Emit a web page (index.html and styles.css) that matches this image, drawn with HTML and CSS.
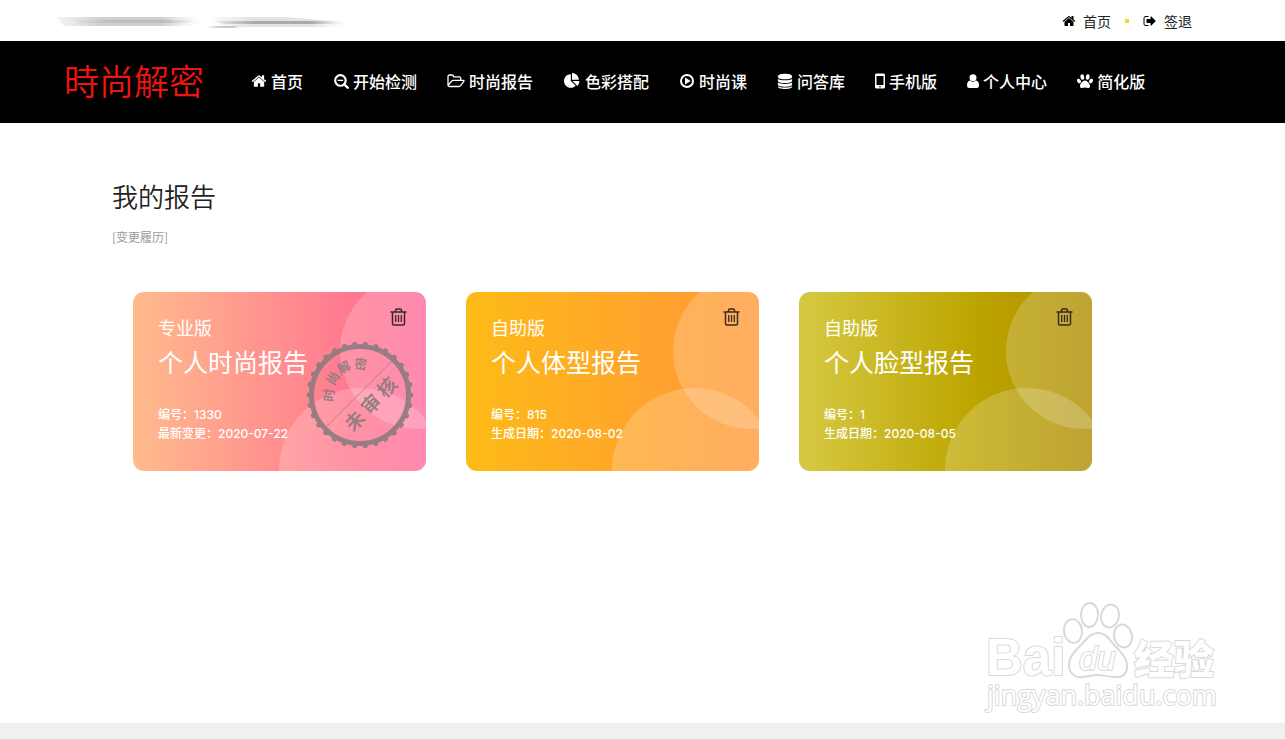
FILE: index.html
```html
<!DOCTYPE html>
<html lang="zh-CN">
<head>
<meta charset="utf-8">
<meta name="viewport" content="width=device-width, initial-scale=1">
<title>我的报告</title>
<link rel="stylesheet" href="styles.css">
</head>
<body>
<svg class="defs" aria-hidden="true">
  <symbol id="home" viewBox="0 0 1792 1792"><path d="M1472 992v480q0 26-19 45t-45 19h-384v-384h-256v384h-384q-26 0-45-19t-19-45v-480q0-1 .5-3t.5-3l575-474 575 474q1 2 1 6zm223-69l-62 74q-8 9-21 11h-3q-13 0-21-7l-692-577-692 577q-12 8-24 7-13-2-21-11l-62-74q-8-10-7-23.5t11-21.5l719-599q32-26 76-26t76 26l244 204v-195q0-14 9-23t23-9h192q14 0 23 9t9 23v408l219 182q10 8 11 21.5t-7 23.5z"/></symbol>
  <symbol id="exit" viewBox="0 0 1792 1792"><path d="M704 1440q0 4 1 20t.5 26.5-3 23.5-10 19.5-20.5 6.5h-320q-119 0-203.5-84.5t-84.5-203.5v-704q0-119 84.5-203.5t203.5-84.5h320q13 0 22.5 9.5t9.5 22.5q0 4 1 20t.5 26.5-3 23.5-10 19.5-20.5 6.5h-320q-66 0-113 47t-47 113v704q0 66 47 113t113 47h312l11.5 1 11.5 3 8 5.5 7 9 2 13.5zm928-544q0 26-19 45l-544 544q-19 19-45 19t-45-19-19-45v-288h-448q-26 0-45-19t-19-45v-384q0-26 19-45t45-19h448v-288q0-26 19-45t45-19 45 19l544 544q19 19 19 45z"/></symbol>
  <symbol id="trash" viewBox="0 0 17 18"><g fill="none" stroke="currentColor" stroke-width="1.5"><path d="M.5 3.9h16M5.5 3.6V2.4q0-1.5 1.5-1.5h3q1.500 0 1.500 1.500v1.200M2.500 4v11.700q0 1.300 1.300 1.300h9.400q1.300 0 1.300-1.300V4"/><path stroke-width="1.300" d="M5.700 7v7M8.500 7v7M11.300 7v7"/></g></symbol>
</svg>

<div class="topbar">
  <svg class="smudge" viewBox="0 0 300 20" aria-hidden="true">
    <defs>
      <linearGradient id="fadeA"><stop offset="0" stop-color="#ccc" stop-opacity=".4"/><stop offset=".3" stop-color="#aaa"/><stop offset=".75" stop-color="#aaa"/><stop offset="1" stop-color="#ccc" stop-opacity="0"/></linearGradient>
      <filter id="soft" x="-10%" y="-50%" width="120%" height="200%"><feGaussianBlur stdDeviation="1 .6"/></filter>
    </defs>
    <g fill="url(#fadeA)" filter="url(#soft)">
      <path opacity=".55" d="M2 6h142v9H10z"/>
      <path opacity=".5" d="M20 9h124v3H26z"/>
      <path opacity=".35" d="M158 6h74l58 5-4 5H170z"/>
      <path d="M160 10h130v3H172z"/>
      <path opacity=".6" d="M155 15h32v2h-32z"/>
    </g>
  </svg>
  <nav class="account">
    <a href="#"><svg class="icon-sm"><use href="#home"/></svg>首页</a>
    <span class="dot"></span>
    <a href="#"><svg class="icon-sm"><use href="#exit"/></svg>签退</a>
  </nav>
</div>

<header class="header">
  <a class="logo" href="#" aria-label="時尚解密"><svg viewBox="0 0 144 56"><text x="0" y="41">時尚解密</text></svg></a>
  <nav class="menu">
    <a href="#"><svg viewBox="0 0 1792 1792"><use href="#home"/></svg>首页</a>
    <a href="#"><svg viewBox="0 0 1792 1792"><circle cx="832" cy="832" r="590" fill="none" stroke="currentColor" stroke-width="240"/><path d="M1270 1270l380 380" stroke="currentColor" stroke-width="270" stroke-linecap="round"/><path d="M520 750h620v150H520z"/></svg>开始检测</a>
    <a href="#"><svg class="wide" viewBox="0 0 18 16"><path fill="none" stroke="currentColor" stroke-width="1.300" stroke-linejoin="round" d="M1 12V3.500Q1 2 2.500 2H5q1.500 0 1.500 1.500v.3h5.700q1.500 0 1.500 1.500v2M1 12.500l3.600-4.400q.7-.8 1.600-.8h10q1.300 0 .6 1.100l-3 4q-.8 1.100-2 1.100H2.500Q1 13.500 1 12z"/></svg>时尚报告</a>
    <a href="#"><svg class="wide" viewBox="0 0 1792 1792"><path d="M768 890l546 546q-106 108-247.500 168t-298.500 60q-209 0-385.500-103t-279.500-279.500-103-385.500 103-385.500 279.500-279.500 385.500-103v762zm187 6h773q0 157-60 298.500t-168 247.500zm709-128h-768v-768q209 0 385.500 103t279.500 279.500 103 385.500z"/></svg>色彩搭配</a>
    <a href="#"><svg viewBox="0 0 16 16"><circle cx="8" cy="8" r="6" fill="none" stroke="currentColor" stroke-width="2"/><path d="M6 4.600L11.700 8 6 11.400z"/></svg>时尚课</a>
    <a href="#"><svg viewBox="0 0 16 18"><path d="M0 3.500C0-.2 16-.2 16 3.500v1c0 3.500-16 3.500-16 0zM0 6.700c2 2 14 2 16 0v2c0 3.400-16 3.400-16 0zM0 10.800c2 2 14 2 16 0v2c0 3.400-16 3.400-16 0zM0 14.900c2 2 14 2 16 0v.6c0 3.300-16 3.300-16 0z"/></svg>问答库</a>
    <a href="#"><svg class="narrow" viewBox="0 0 10 16"><path fill-rule="evenodd" d="M1.500.5h7q1.500 0 1.500 1.500v12q0 1.500-1.500 1.500h-7Q0 15.500 0 14V2Q0 .5 1.500.5zM1.500 3v9h7V3zM5 13a.8.8 0 100 1.600.8.8 0 000-1.600z"/></svg>手机版</a>
    <a href="#"><svg class="person" viewBox="0 0 12 16"><circle cx="6" cy="4.700" r="3.500"/><path d="M3 7.500q3 2.400 6 0 3 .5 3 5 0 2.500-2.200 2.500H2.200Q0 15 0 12.500q0-4.500 3-5z"/></svg>个人中心</a>
    <a href="#"><svg viewBox="0 0 16 16"><ellipse cx="5.300" cy="4" rx="1.900" ry="2.700" transform="rotate(-12 5.300 4)"/><ellipse cx="10.700" cy="4" rx="1.900" ry="2.700" transform="rotate(12 10.700 4)"/><ellipse cx="2" cy="8" rx="1.800" ry="2.400" transform="rotate(-25 2 8)"/><ellipse cx="14" cy="8" rx="1.800" ry="2.400" transform="rotate(25 14 8)"/><path d="M8 7.500c2.200 0 5 3.300 5 5.500 0 3.200-3 1.600-5 1.600s-5 1.600-5-1.600c0-2.200 2.800-5.500 5-5.500z"/></svg>简化版</a>
  </nav>
</header>

<main class="content">
  <h1>我的报告</h1>
  <a class="history" href="#">[变更履历]</a>

  <section class="cards">
    <article class="card pink">
      <svg class="bubbles" viewBox="0 0 293 179" aria-hidden="true"><circle cx="285" cy="59" r="78"/><circle cx="228" cy="178" r="82"/></svg>
      <p class="edition">专业版</p>
      <h2>个人时尚报告</h2>
      <p class="meta">编号：1330</p>
      <p class="meta">最新变更：2020-07-22</p>
      <button class="remove" aria-label="删除"><svg><use href="#trash"/></svg></button>
      <svg class="stamp" viewBox="0 0 110 110">
        <circle class="ring" cx="55" cy="55" r="48.500"/>
        <circle class="teeth" cx="55" cy="55" r="51" pathLength="180"/>
        <path class="rule" d="M22 86L86 22"/>
        <g class="stamp-small">
          <text transform="translate(24 55) rotate(-85)" y="5">时</text>
          <text transform="translate(28 38) rotate(-58)" y="5">尚</text>
          <text transform="translate(39 27) rotate(-27)" y="5">解</text>
          <text transform="translate(56 24) rotate(6)" y="5">密</text>
        </g>
        <text class="stamp-big" transform="translate(66 64) rotate(-46)" y="7">未 审 核</text>
      </svg>
    </article>
    <article class="card orange">
      <svg class="bubbles" viewBox="0 0 293 179" aria-hidden="true"><circle cx="285" cy="59" r="78"/><circle cx="228" cy="178" r="82"/></svg>
      <p class="edition">自助版</p>
      <h2>个人体型报告</h2>
      <p class="meta">编号：815</p>
      <p class="meta">生成日期：2020-08-02</p>
      <button class="remove" aria-label="删除"><svg><use href="#trash"/></svg></button>
    </article>
    <article class="card olive">
      <svg class="bubbles" viewBox="0 0 293 179" aria-hidden="true"><circle cx="285" cy="59" r="78"/><circle cx="228" cy="178" r="82"/></svg>
      <p class="edition">自助版</p>
      <h2>个人脸型报告</h2>
      <p class="meta">编号：1</p>
      <p class="meta">生成日期：2020-08-05</p>
      <button class="remove" aria-label="删除"><svg><use href="#trash"/></svg></button>
    </article>
  </section>

  <svg class="watermark" viewBox="0 0 250 120">
    <g class="mark">
      <ellipse cx="98" cy="33" rx="9" ry="12" transform="rotate(-8 98 33)"/>
      <ellipse cx="114.500" cy="17" rx="8.500" ry="12" transform="rotate(3 114.500 17)"/>
      <ellipse cx="135" cy="18" rx="9" ry="11.500" transform="rotate(12 135 18)"/>
      <ellipse cx="148" cy="38" rx="9" ry="11.500" transform="rotate(-12 148 38)"/>
      <path d="M123 35c-8 0-11 6-17 12-7 7-12 12-12 20 0 9 7 13 13 12 8-1 10-2 16-2s9 2 17 2c8 1 13-4 12-13-1-7-6-12-12-18-6-7-9-13-17-13z"/>
      <text class="wm-latin" x="11" y="77">Bai</text>
      <text class="wm-du" x="104" y="72">du</text>
      <text class="wm-cjk" x="159" y="76">经验</text>
      <text class="wm-url" x="12" y="107">jingyan.baidu.com</text>
    </g>
  </svg>
</main>
<footer class="footer"></footer>
</body>
</html>
```

FILE: styles.css
```css
* { box-sizing: border-box; }
body {
  margin: 0;
  min-height: 100vh;
  display: flex;
  flex-direction: column;
  background: #fff;
  color: #222;
  font-family: "Noto Sans CJK SC", sans-serif;
}
a { color: inherit; text-decoration: none; }
h1, h2, p { margin: 0; font-weight: 400; }
svg { fill: currentColor; flex: none; }
.defs { position: absolute; width: 0; height: 0; }

.topbar {
  height: 41px;
  padding: 0 93px 0 54px;
  display: flex;
  align-items: center;
  justify-content: space-between;
}
.smudge { width: 300px; height: 20px; }
.account { display: flex; align-items: center; gap: 14px; font-size: 14px; line-height: 20px; color: #222; }
.account a { display: flex; align-items: center; gap: 7px; }
.icon-sm { width: 14px; height: 14px; color: #000; }
.dot { width: 4px; height: 4px; background: #eadb1e; }

.header {
  height: 82px;
  padding: 0 64px;
  display: flex;
  align-items: center;
  background: #000;
  color: #fff;
}
.logo { display: flex; color: #f0140f; }
.logo svg { width: 144px; height: 56px; }
.logo text { font-family: "Noto Sans CJK SC", sans-serif; font-size: 35px; font-weight: 350; }
.menu { display: flex; gap: 30px; margin-left: 43px; padding-bottom: 2px; font-size: 16px; font-weight: 500; line-height: 24px; }
.menu a { display: flex; align-items: center; gap: 4px; white-space: nowrap; }
.menu svg { width: 16px; height: 16px; }
.menu .wide { width: 18px; height: 16px; }
.menu .narrow { width: 10px; }
.menu .person { width: 12px; }

.content {
  position: relative;
  flex: 1;
  padding: 54px 112px 40px;
}
h1 { font-size: 26px; line-height: 38px; font-weight: 350; }
.history { display: block; margin-top: 13px; font-size: 12px; line-height: 18px; color: #999; }
.cards { display: flex; flex-wrap: wrap; gap: 40px; margin-top: 46px; padding-left: 21px; }
.card {
  position: relative;
  width: 293px;
  min-height: 179px;
  padding: 22px 25px;
  border-radius: 11px;
  color: #fff;
}
.pink { background: linear-gradient(90deg, #ffbb8c, #ff7890 75%, #ff6c9b); }
.orange { background: linear-gradient(90deg, #fdbb16, #ff9f31 75%, #ff9a38); }
.olive { background: linear-gradient(90deg, #d6c943, #bda500 60%, #ae8d00); }
.bubbles { position: absolute; inset: 0; width: 100%; height: 100%; border-radius: 11px; fill: #fff; fill-opacity: .2; }
.card p, .card h2 { position: relative; }
.edition { font-size: 18px; line-height: 26px; }
.card h2 { margin: 2px 0 25px; font-size: 25px; line-height: 38px; }
.meta { font-family: Inter, "Noto Sans CJK SC", sans-serif; font-size: 12px; font-weight: 500; line-height: 19px; }
.remove {
  position: absolute;
  top: 16px;
  right: 19px;
  padding: 0;
  border: 0;
  background: none;
  color: #3a2a22;
  cursor: pointer;
}
.remove svg { display: block; width: 17px; height: 18px; }
.stamp { position: absolute; right: 11px; top: 48px; width: 110px; height: 110px; color: #8d7b80; opacity: .9; }
.ring { fill: none; stroke: currentColor; stroke-width: 5; }
.teeth { fill: none; stroke: currentColor; stroke-width: 5; stroke-linecap: round; stroke-dasharray: 0.100 5.900; }
.rule { stroke: currentColor; stroke-width: 1; opacity: .7; }
.stamp text { font-weight: 700; text-anchor: middle; }
.stamp-small { font-size: 13px; }
.stamp-big { font-size: 19px; }

.watermark { position: absolute; right: 60px; bottom: 5px; width: 250px; height: 120px; }
.mark { fill: #fff; stroke: #d9d9d9; stroke-width: 2; stroke-linejoin: round; }
.mark text { paint-order: stroke; }
.wm-latin { font: 700 51px "Liberation Sans", sans-serif; }
.wm-du { font: italic 400 33px "Liberation Sans", sans-serif; }
.wm-cjk { font: 900 40px "Noto Sans CJK SC", sans-serif; }
.wm-url { font: 400 27px "Open Sans", sans-serif; }

.footer { height: 17px; background: #f0f0f0; border-bottom: 1px solid #ddd; }
```
